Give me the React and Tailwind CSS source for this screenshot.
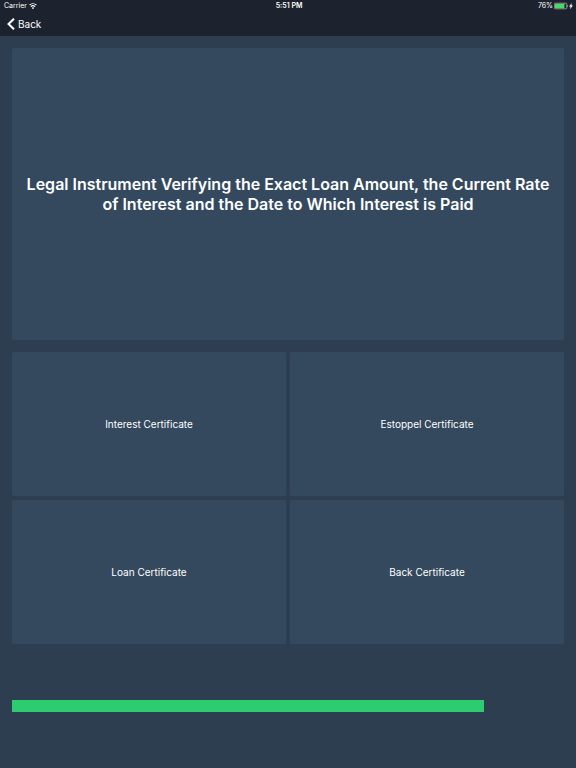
import React, { useState } from "react";

const question = {
  text: "Legal Instrument Verifying the Exact Loan Amount, the Current Rate of Interest and the Date to Which Interest is Paid",
  answers: [
    "Interest Certificate",
    "Estoppel Certificate",
    "Loan Certificate",
    "Back Certificate",
  ],
};

const WifiIcon = () => (
  <svg className="w-2 h-2" viewBox="0 0 16 14" fill="none" aria-hidden="true">
    <path d="M1.2 5.2a9.8 9.8 0 0 1 13.6 0" stroke="currentColor" strokeWidth="2.4" />
    <path d="M3.9 8.2a5.9 5.9 0 0 1 8.2 0" stroke="currentColor" strokeWidth="2.4" />
    <path d="M8 13.4 5.4 10.6a3.8 3.8 0 0 1 5.2 0Z" fill="currentColor" />
  </svg>
);

const BatteryIcon = () => (
  <svg className="w-5 h-2" viewBox="0 0 20 8" fill="none" aria-hidden="true">
    <rect x="0.4" y="1.2" width="12.4" height="5.6" rx="1" stroke="#d5d8dc" strokeWidth="0.6" />
    <rect x="1" y="1.8" width="9.4" height="4.4" rx="0.4" fill="#4cd964" />
    <path d="M13.4 2.9c.8.2.8 2 0 2.2Z" fill="#d5d8dc" />
    <path d="M17.8 1 15 4.4h1.6l-.6 2.8 2.9-3.6h-1.6Z" fill="white" />
  </svg>
);

const StatusBar = () => (
  <div className="grid grid-cols-3 items-center h-3 pl-1 pr-0.5 text-[7px] leading-3">
    <div className="flex items-center gap-0.5">
      <span>Carrier</span>
      <WifiIcon />
    </div>
    <span className="text-center font-semibold">5:51 PM</span>
    <div className="flex items-center justify-end gap-px">
      <span>76%</span>
      <BatteryIcon />
    </div>
  </div>
);

const App = () => {
  const [selected, setSelected] = useState(null);
  const [timeLeft] = useState(85.5); // percent of the time remaining

  return (
    <div className="flex flex-col min-h-screen bg-[#2d3e50] text-white font-['Inter','Liberation_Sans',sans-serif]">
      <header className="bg-[#1c232e]">
        <StatusBar />
        <nav className="flex items-center h-6 px-[7px]">
          <button className="flex items-center gap-[3px] text-[10px] leading-3">
            <svg className="w-2 h-3" viewBox="0 0 8 12" fill="none" aria-hidden="true">
              <path d="M7 0.7 1.5 6 7 11.3" stroke="currentColor" strokeWidth="2" />
            </svg>
            Back
          </button>
        </nav>
      </header>

      <main className="flex flex-col grow px-3 pt-3 pb-14">
        <section className="flex grow basis-[0px] items-center justify-center px-3 rounded-xs bg-[#34495e]">
          <h1 className="text-center text-base leading-5 font-semibold">
            {question.text}
          </h1>
        </section>

        {/* Answers */}
        <div className="grid grow basis-[0px] grid-cols-2 grid-rows-2 gap-1 mt-3">
          {question.answers.map((answer, index) => (
            <button
              key={index}
              className="rounded-xs bg-[#34495e] text-[10px] leading-3"
              aria-pressed={selected === index}
              onClick={() => setSelected(index)}
            >
              {answer}
            </button>
          ))}
        </div>

        {/* Timer bar */}
        <div className="h-3 mt-14">
          <div className="h-full bg-[#2ecc71]" style={{ width: `${timeLeft}%` }} />
        </div>
      </main>
    </div>
  );
};

export default App;
